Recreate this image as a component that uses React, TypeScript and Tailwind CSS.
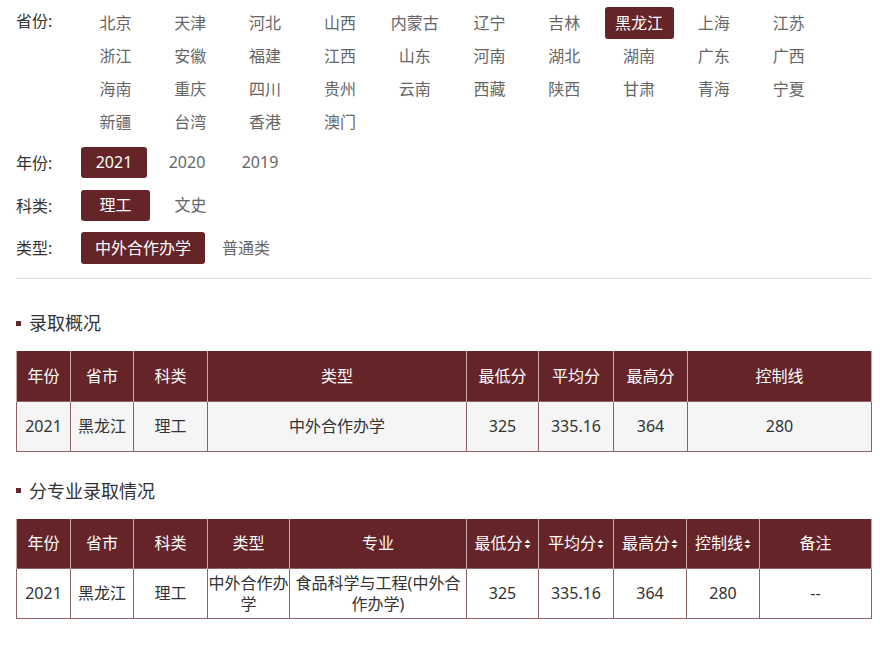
import React from "react";

const provinces = [
  "北京", "天津", "河北", "山西", "内蒙古", "辽宁", "吉林", "黑龙江", "上海", "江苏",
  "浙江", "安徽", "福建", "江西", "山东", "河南", "湖北", "湖南", "广东", "广西",
  "海南", "重庆", "四川", "贵州", "云南", "西藏", "陕西", "甘肃", "青海", "宁夏",
  "新疆", "台湾", "香港", "澳门",
];

function SortIcon() {
  return (
    <svg width="7" height="10" viewBox="0 0 7 10" className="inline-block ml-px -mt-0.5">
      <path d="M3.5 0.5 L6.5 4 L0.5 4 Z" fill="#fff" />
      <path d="M3.5 9.5 L6.5 6 L0.5 6 Z" fill="#fff" />
    </svg>
  );
}

function SectionTitle({ text }: { text: string }) {
  return (
    <div className="flex items-center h-[24px] text-[18px] leading-[24px] text-[#333]">
      <span className="w-[5px] h-[5px] bg-[#652428] mr-[8px]" />
      <span>{text}</span>
    </div>
  );
}

export default function App() {
  const th = "border-x border-[#c9a9aa] h-[50px] p-0 font-normal text-white text-[16px] text-center align-middle";
  const td = "border border-[#8f6264] h-[50px] p-0 text-[16px] text-[#333] text-center align-middle leading-[21px]";

  return (
    <div className="w-[880px] h-[657px] bg-white font-['Noto_Sans','Noto_Sans_CJK_SC',sans-serif] text-[#333] overflow-hidden">
      {/* Filters */}
      <div className="pl-[16px] pt-[7px]">
        <div className="flex">
          <div className="w-[65px] h-[32px] leading-[32px] text-[16px] text-[#333] -mt-[2px]">省份:</div>
          <div className="grid grid-cols-[repeat(10,69px)] gap-x-[5.8px] gap-y-px">
            {provinces.map((p) => (
              <div
                key={p}
                className={
                  p === "黑龙江"
                    ? "h-[32px] leading-[32px] text-center text-[16px] rounded-[3px] bg-[#652428] text-white"
                    : "h-[32px] leading-[32px] text-center text-[16px] text-[#666]"
                }
              >
                {p}
              </div>
            ))}
          </div>
        </div>

        <div className="flex items-center mt-[9px]">
          <div className="w-[65px] text-[16px] text-[#333]">年份:</div>
          <div className="flex gap-[7px]">
            <div className="w-[66px] h-[31px] leading-[31px] text-center text-[16px] rounded-[3px] bg-[#652428] text-white">2021</div>
            <div className="w-[66px] h-[31px] leading-[31px] text-center text-[16px] text-[#666]">2020</div>
            <div className="w-[66px] h-[31px] leading-[31px] text-center text-[16px] text-[#666]">2019</div>
          </div>
        </div>

        <div className="flex items-center mt-[12px]">
          <div className="w-[65px] text-[16px] text-[#333]">科类:</div>
          <div className="flex gap-[6px]">
            <div className="w-[69px] h-[31px] leading-[31px] text-center text-[16px] rounded-[3px] bg-[#652428] text-white">理工</div>
            <div className="w-[69px] h-[31px] leading-[31px] text-center text-[16px] text-[#666]">文史</div>
          </div>
        </div>

        <div className="flex items-center mt-[11px]">
          <div className="w-[65px] text-[16px] text-[#333]">类型:</div>
          <div className="flex gap-[3px]">
            <div className="w-[124px] h-[32px] leading-[32px] text-center text-[16px] rounded-[3px] bg-[#652428] text-white">中外合作办学</div>
            <div className="w-[76px] h-[32px] leading-[32px] text-center text-[16px] text-[#666]">普通类</div>
          </div>
        </div>
      </div>

      <div className="ml-[16px] w-[855px] mt-[14px] border-t border-[#dcdcdc]" />

      {/* Section 1 */}
      <div className="px-[16px] pt-[32px]">
        <SectionTitle text="录取概况" />
        <table className="mt-[16px] w-[855px] table-fixed border-collapse">
          <colgroup>
            <col className="w-[54px]" />
            <col className="w-[63px]" />
            <col className="w-[74px]" />
            <col className="w-[259px]" />
            <col className="w-[72px]" />
            <col className="w-[75px]" />
            <col className="w-[74px]" />
            <col className="w-[184px]" />
          </colgroup>
          <thead>
            <tr className="bg-[#652428]">
              {["年份", "省市", "科类", "类型", "最低分", "平均分", "最高分", "控制线"].map((h) => (
                <th key={h} className={th}>{h}</th>
              ))}
            </tr>
          </thead>
          <tbody>
            <tr className="bg-[#f5f5f5]">
              {["2021", "黑龙江", "理工", "中外合作办学", "325", "335.16", "364", "280"].map((v, i) => (
                <td key={i} className={td}>{v}</td>
              ))}
            </tr>
          </tbody>
        </table>
      </div>

      {/* Section 2 */}
      <div className="px-[16px] pt-[27px]">
        <SectionTitle text="分专业录取情况" />
        <table className="mt-[16px] w-[855px] table-fixed border-collapse">
          <colgroup>
            <col className="w-[54px]" />
            <col className="w-[63px]" />
            <col className="w-[74px]" />
            <col className="w-[82px]" />
            <col className="w-[177px]" />
            <col className="w-[72px]" />
            <col className="w-[75px]" />
            <col className="w-[73px]" />
            <col className="w-[73px]" />
            <col className="w-[112px]" />
          </colgroup>
          <thead>
            <tr className="bg-[#652428]">
              <th className={th}>年份</th>
              <th className={th}>省市</th>
              <th className={th}>科类</th>
              <th className={th}>类型</th>
              <th className={th}>专业</th>
              <th className={th}>最低分<SortIcon /></th>
              <th className={th}>平均分<SortIcon /></th>
              <th className={th}>最高分<SortIcon /></th>
              <th className={th}>控制线<SortIcon /></th>
              <th className={th}>备注</th>
            </tr>
          </thead>
          <tbody>
            <tr className="bg-white">
              <td className={td}>2021</td>
              <td className={td}>黑龙江</td>
              <td className={td}>理工</td>
              <td className={td}>中外合作办学</td>
              <td className={td + " px-[5px]"}>食品科学与工程(中外合作办学)</td>
              <td className={td}>325</td>
              <td className={td}>335.16</td>
              <td className={td}>364</td>
              <td className={td}>280</td>
              <td className={td}>--</td>
            </tr>
          </tbody>
        </table>
      </div>
    </div>
  );
}
